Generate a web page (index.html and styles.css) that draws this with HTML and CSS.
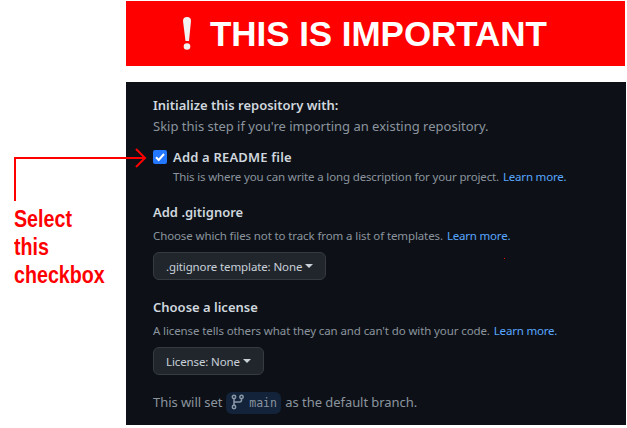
FILE: index.html
```
<!DOCTYPE html>
<html lang="en">
<head>
<meta charset="utf-8">
<title>Initialize repository</title>
<link rel="stylesheet" href="styles.css">
</head>
<body>
<main class="guide">
  <aside class="callout">
    <svg class="arrow" width="134" height="53" viewBox="0 0 134 53" fill="none" stroke="#f00" stroke-width="2"><path d="M1 53V10H131M122 1l9 9-9 9"/></svg>
    <p class="callout-text">Select<br>this<br>checkbox</p>
  </aside>
  <div class="content">
    <header class="banner">
      <svg class="mark" width="12" height="34" viewBox="0 0 12 34" fill="#f2f2f2"><path d="M2 4Q2 0 6 0t4 4L8 24H4.500Z"/><circle cx="6" cy="29.500" r="3.300"/></svg>
      <h1>THIS IS IMPORTANT</h1>
    </header>
    <section class="panel">
      <h2 class="title">Initialize this repository with:</h2>
      <p class="lead">Skip this step if you're importing an existing repository.</p>
      <div class="option">
        <span class="check"><svg width="14" height="14" viewBox="0 0 14 14" fill="none" stroke="#fff" stroke-width="2"><path d="M3 7.200l2.700 2.800L11 4"/></svg></span>
        <h2 class="title readme">Add a README file</h2>
      </div>
      <p class="note readme-note"><span>This is where you can write a long description for your project.</span><a>Learn more.</a></p>
      <h2 class="title ignore">Add .gitignore</h2>
      <p class="note ignore-note"><span>Choose which files not to track from a list of templates.</span><a>Learn more.</a></p>
      <div class="button template"><span>.gitignore template: None</span><i class="caret"></i></div>
      <h2 class="title license">Choose a license</h2>
      <p class="note license-note"><span>A license tells others what they can and can't do with your code.</span><a>Learn more.</a></p>
      <div class="button none"><span>License: None</span><i class="caret"></i></div>
      <div class="lead branch"><span>This will set</span><span class="chip"><svg width="14" height="16" viewBox="0 0 14 16" fill="none" stroke="#8b98a8" stroke-width="1.500"><circle cx="3" cy="2.900" r="1.700"/><circle cx="3" cy="13" r="1.700"/><circle cx="10.500" cy="2.900" r="1.700"/><path d="M3 4.500v7M10.500 4.500V6q0 2-2 2H3"/></svg><code>main</code></span><span>as the default branch.</span></div>
      <i class="speck"></i>
    </section>
  </div>
</main>
</body>
</html>
```
FILE: styles.css
```
* { box-sizing: border-box; }
body { margin: 0; width: 627px; height: 428px; overflow: hidden; background: #fff; font-family: "Noto Sans", sans-serif; }
h1, h2, p { margin: 0; white-space: nowrap; }
.guide { display: flex; height: 428px; }
.callout { flex: 0 0 126px; min-width: 0; width: 126px; padding: 148px 0 0 14px; position: relative; z-index: 1; }
.arrow { display: block; overflow: visible; }
.callout-text { margin-top: 4px; font: bold 23px/28px "Liberation Sans", sans-serif; color: #f00; transform: scaleX(0.855); transform-origin: left; }
.content { flex: 1; min-width: 0; padding-top: 1px; }
.banner { display: flex; align-items: center; width: 499px; height: 65px; padding-left: 55px; background: #f00; color: #fff; }
.mark { margin-right: 17px; }
.banner h1 { font: bold 35px/40px "Liberation Sans", sans-serif; letter-spacing: -0.05px; }
.panel { position: relative; width: 500px; margin-top: 16px; height: 343px; padding: 13px 0 0 27px; background: #0d1117; color: #8b949e; }
.title { font-size: 13px; line-height: 20px; font-weight: 600; color: #d0d7de; }
.lead { font-size: 13px; line-height: 22px; }
.option { display: flex; align-items: center; gap: 6px; margin-top: 10px; }
.readme { letter-spacing: 0.18px; }
.check { width: 14px; height: 14px; border-radius: 2px; background: #2477ff; }
.check svg { display: block; }
.note { display: flex; gap: 4px; font-size: 11.5px; line-height: 18px; }
.note a { color: #58a6ff; letter-spacing: -0.2px; }
.readme-note { margin: 1px 0 0 20px; letter-spacing: -0.15px; }
.ignore { margin-top: 16px; }
.ignore-note, .license-note { margin-top: 5px; letter-spacing: -0.11px; }
.license { margin-top: 17px; }
.button { display: flex; align-items: center; height: 28px; margin-top: 7px; padding-left: 12px; border: 1px solid #363b42; border-radius: 6px; background: #21262d; color: #c9d1d9; font-size: 11.5px; letter-spacing: -0.12px; }
.template { width: 173px; }
.none { width: 111px; }
.caret { border: 4px solid transparent; border-top-color: #c9d1d9; border-bottom: 0; margin-left: 3px; }
.branch { display: flex; gap: 4px; margin-top: 17px; line-height: 20px; letter-spacing: -0.06px; white-space: nowrap; }
.chip { display: flex; align-items: center; width: 55px; height: 22px; padding-left: 5px; gap: 4px; background: #12233a; border-radius: 6px; }
.chip svg { margin-top: -2px; }
code { font: 11.5px/22px "DejaVu Sans Mono", monospace; }
.speck { position: absolute; left: 378px; top: 176px; width: 1px; height: 1px; background: #f00; }
```
